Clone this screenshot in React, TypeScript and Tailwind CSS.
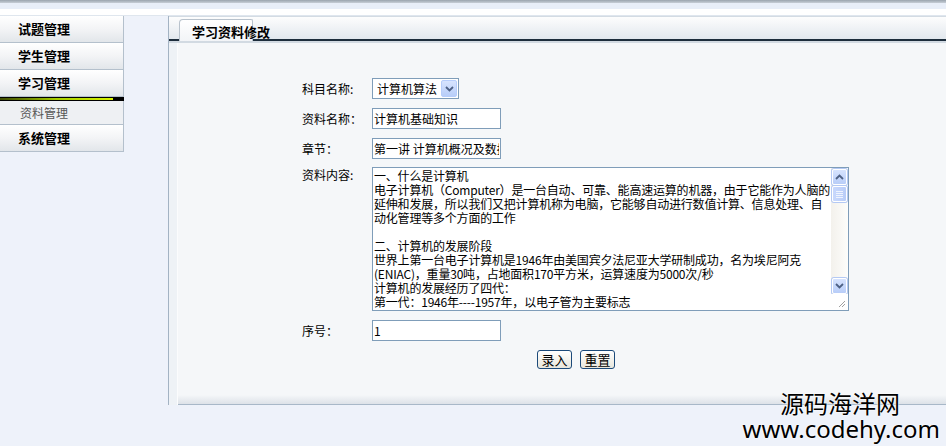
import React from "react";

const font = "font-['Noto_Sans_CJK_SC','Noto_Sans',sans-serif]";

const menu = ["试题管理", "学生管理", "学习管理"];

const content = [
  "一、什么是计算机",
  "电子计算机（Computer）是一台自动、可靠、能高速运算的机器，由于它能作为人脑的",
  "延伸和发展，所以我们又把计算机称为电脑，它能够自动进行数值计算、信息处理、自",
  "动化管理等多个方面的工作",
  "",
  "二、计算机的发展阶段",
  "世界上第一台电子计算机是1946年由美国宾夕法尼亚大学研制成功，名为埃尼阿克",
  "(ENIAC)，重量30吨，占地面积170平方米，运算速度为5000次/秒",
  "计算机的发展经历了四代：",
  "第一代：1946年----1957年，以电子管为主要标志",
];

function MenuItem({ label }: { label: string }) {
  return (
    <div className="h-[27px] border-b border-r border-[#b4c0cc] bg-gradient-to-b from-white via-[#f3f4f6] to-[#e2e6ea] flex items-center pl-[18px] text-[13px] font-bold text-black">
      {label}
    </div>
  );
}

function Arrow({ up }: { up?: boolean }) {
  return (
    <svg width="9" height="6" viewBox="0 0 9 6" className={up ? "rotate-180" : ""}>
      <path d="M1 1 L4.5 4.5 L8 1" fill="none" stroke="#4d6185" strokeWidth="1.8" />
    </svg>
  );
}

function ScrollBtn({ up }: { up?: boolean }) {
  return (
    <div className="h-[16px] mx-[1px] rounded-[2px] border border-white bg-gradient-to-b from-[#d6e3fe] to-[#b8cdf8] flex items-center justify-center shadow-[0_0_0_1px_#b4c9f4]">
      <Arrow up={up} />
    </div>
  );
}

function Field({ value }: { value: string }) {
  return (
    <input
      readOnly
      value={value}
      className={`${font} w-[129px] h-[21px] border border-[#7f9db9] bg-white px-[1px] text-[12px] text-black outline-none`}
    />
  );
}

function Btn({ label }: { label: string }) {
  return (
    <button className="h-[19px] w-[35px] rounded-[3px] border border-[#1c4a7a] bg-gradient-to-b from-white to-[#e8e6dc] text-[13px] leading-none text-black">
      {label}
    </button>
  );
}

export default function App() {
  return (
    <div className={`${font} relative w-[946px] h-[446px] overflow-hidden bg-[#eef2fa] text-[12px] text-black`}>
      {/* top strip */}
      <div className="h-[3px] bg-gradient-to-b from-[#9aa4ae] to-[#c7ced6]" />
      <div className="h-[6px] bg-[#e8eef8]" />
      <div className="h-[7px] bg-white border-b border-[#dfe6ee]" />

      <div className="flex">
        {/* sidebar */}
        <div className="w-[124px] shrink-0">
          {menu.map((m) => (
            <MenuItem key={m} label={m} />
          ))}
          <div className="h-[4px] bg-black px-0 py-[1px] pr-[11px]">
            <div className="h-[2px] bg-gradient-to-r from-[#3c4a00] via-[#a8d000] to-[#d8f400]" />
          </div>
          <div className="h-[24px] border-b border-r border-[#b4c0cc] bg-[#eef0f3] flex items-center pl-[20px] text-[12px] text-[#555]">
            资料管理
          </div>
          <MenuItem label="系统管理" />
        </div>

        {/* main panel */}
        <div className="ml-[44px] flex-1 h-[389px] border-l border-[#a3b3c3] flex flex-col">
          {/* header */}
          <div className="h-[27px] flex flex-col border-t border-[#d3dbe3] bg-gradient-to-b from-[#fdfdfd] to-[#dde4eb]">
            <div className="flex-1 flex items-end">
              <div className="w-[10px] h-[2px] bg-[#1d2d3c]" />
              <div className="relative w-[74px] h-[22px] rounded-tl-[4px] rounded-tr-[2px] border border-b-0 border-[#b8c2cc] bg-gradient-to-b from-white to-[#f2f4f7]">
                <span className="absolute left-[12px] top-[4px] whitespace-nowrap text-[13px] font-bold leading-[15px]">
                  学习资料修改
                </span>
              </div>
              <div className="flex-1 h-[2px] bg-[#1d2d3c]" />
            </div>
            <div className="h-[2px] bg-[#d2dae2]" />
          </div>

          {/* body */}
          <div className="flex-1 flex">
            <div className="w-[9px] bg-[#eef2f6] border-r border-[#fbfcfd]" />
            <div className="flex-1 flex flex-col bg-[#f5f7f9]">
              <div className="flex-1 pl-[124px] pt-[35px]">
                <div className="grid grid-cols-[70px_auto] gap-y-[9px] items-center">
                  <div>科目名称:</div>
                  <div className="w-[87px] h-[21px] border border-[#7f9db9] bg-white flex items-center">
                    <span className="flex-1 pl-[4px] text-[12px]">计算机算法</span>
                    <div className="w-[16px] h-[17px] mr-[1px] rounded-[2px] border border-[#b6cdfb] bg-gradient-to-b from-[#d7e4fe] to-[#b8cdf8] flex items-center justify-center">
                      <Arrow />
                    </div>
                  </div>

                  <div>资料名称：</div>
                  <Field value="计算机基础知识" />

                  <div>章节：</div>
                  <Field value="第一讲 计算机概况及数据表示" />

                  <div className="self-start leading-[14px]">资料内容:</div>
                  <div className="w-[477px] h-[144px] -mt-[1px] border border-[#7f9db9] bg-white flex">
                    <div className="flex-1 overflow-hidden pl-[1px] pt-[1px] text-[12px] leading-[14px] tracking-[-0.2px] whitespace-pre">
                      {content.map((l, i) => (
                        <div key={i} className="h-[14px]">
                          {l}
                        </div>
                      ))}
                    </div>
                    <div className="w-[17px] flex flex-col">
                      <div className="flex-1 flex flex-col bg-gradient-to-r from-[#f3f1ec] to-[#fdfdfb] pt-[1px]">
                        <ScrollBtn up />
                        <div className="h-[16px] mt-[1px] mx-[1px] rounded-[2px] border border-white bg-gradient-to-r from-[#c8d8fd] to-[#b9cdf8] shadow-[0_0_0_1px_#b4c9f4] flex flex-col items-center justify-center gap-[1px]">
                          <div className="w-[7px] h-px bg-[#eef3fe]" />
                          <div className="w-[7px] h-px bg-[#eef3fe]" />
                          <div className="w-[7px] h-px bg-[#eef3fe]" />
                          <div className="w-[7px] h-px bg-[#eef3fe]" />
                        </div>
                        <div className="flex-1" />
                        <ScrollBtn />
                      </div>
                      <div className="h-[16px] bg-white flex items-end justify-end p-[2px]">
                        <svg width="8" height="8" viewBox="0 0 8 8">
                          <path d="M7 1 L1 7 M7 4 L4 7" stroke="#a0a0a0" strokeWidth="1" />
                        </svg>
                      </div>
                    </div>
                  </div>

                  <div>序号：</div>
                  <Field value="1" />

                  <div />
                  <div className="flex gap-[8px] pl-[165px]">
                    <Btn label="录入" />
                    <Btn label="重置" />
                  </div>
                </div>
              </div>
              <div className="h-[10px] bg-gradient-to-b from-[#f5f7f9] to-[#dde2e8] border-b border-[#a8b8c8]" />
            </div>
          </div>
        </div>
      </div>

      {/* watermark */}
      <div className="absolute right-[6px] bottom-[4px] flex flex-col items-end leading-none text-black [text-shadow:0_0_2px_#fff,0_0_2px_#fff]">
        <div className="text-[24px] mr-[40px] leading-[24px]">源码海洋网</div>
        <div className="font-['Noto_Sans',sans-serif] text-[24px] leading-[27px]">www.codehy.com</div>
      </div>
    </div>
  );
}
